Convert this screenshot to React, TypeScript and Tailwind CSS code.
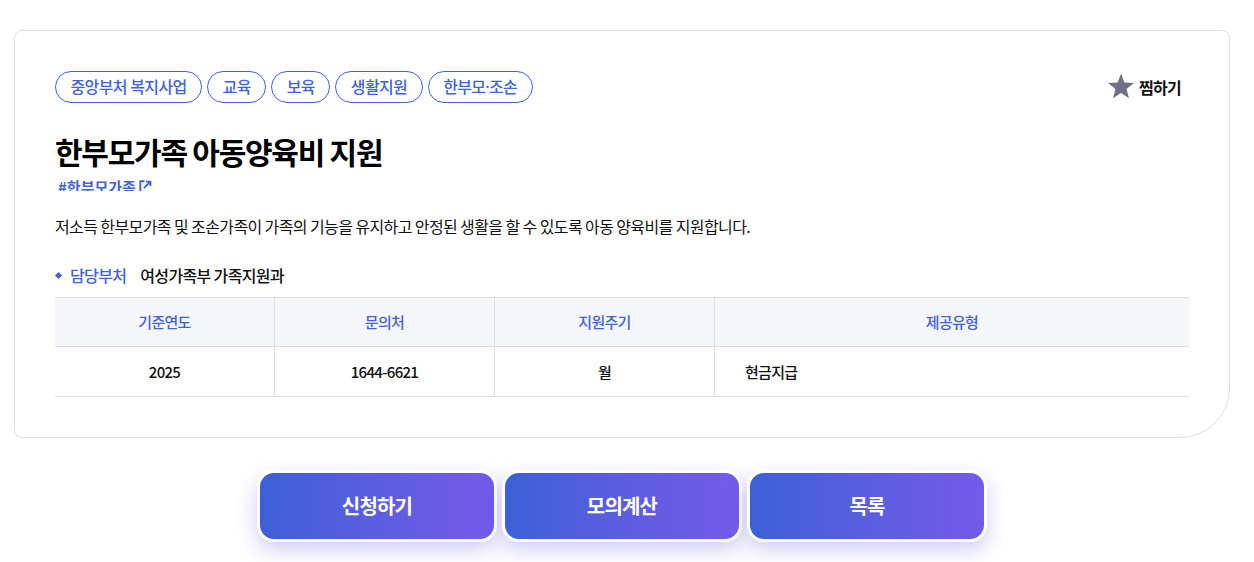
const tags = ["중앙부처 복지사업", "교육", "보육", "생활지원", "한부모·조손"];

const columns = [
  { label: "기준연도", value: "2025" },
  { label: "문의처", value: "1644-6621" },
  { label: "지원주기", value: "월" },
];

const buttons = ["신청하기", "모의계산", "목록"];

export default function App() {
  return (
    <div className="h-[562px] overflow-hidden bg-white pl-[14px] pr-[24px] pt-[30px] font-['Noto_Sans_CJK_KR','Noto_Sans',sans-serif] text-[#111]">
      <section className="h-[408px] rounded-[8px] rounded-br-[50px] border border-[#e1e1e1] bg-white px-[40px] pt-[40px]">
        <div className="flex items-center justify-between">
          <ul className="flex gap-[5px]">
            {tags.map((tag) => (
              <li
                key={tag}
                className="flex h-[32px] items-center rounded-full border border-[#3f63d8] px-[14.5px] font-['Noto_Sans','Noto_Sans_CJK_KR',sans-serif] text-[16px] font-medium tracking-[-0.65px] text-[#3f63d8]"
              >
                {tag}
              </li>
            ))}
          </ul>
          <button className="mr-[8px] flex items-center gap-[5px] text-[16px] font-bold tracking-[-0.7px]">
            <svg viewBox="0 0 26 26" className="mt-[-3px] h-[26px] w-[26px]" fill="#6f7189">
              <path d="M13 0.5l3.4 8.9 9.6.5-7.5 6 2.5 9.3-8-5.2-8 5.2 2.5-9.3-7.5-6 9.6-.5z" />
            </svg>
            찜하기
          </button>
        </div>

        <h1 className="mt-[26px] text-[30px] font-bold leading-[44px] tracking-[-1.25px] text-black">
          한부모가족 아동양육비 지원
        </h1>
        <div className="ml-[3px] mt-[4px] flex h-[14px] items-start overflow-hidden text-[15px] font-bold leading-[20px] text-[#4464dc]">
          #한부모가족
          <svg viewBox="0 0 12 12" className="ml-[3px] mt-[3px] h-[13px] w-[13px]" fill="none" stroke="#3f63d8" strokeWidth="1.8">
            <path d="M5 1.2H1.2v10.8" />
            <path d="M4.5 7.5L10 2M6.5 1.5h4v4" />
          </svg>
        </div>

        <p className="mt-[23px] text-[16px] leading-[24px] tracking-[-0.6px]">
          저소득 한부모가족 및 조손가족이 가족의 기능을 유지하고 안정된 생활을 할 수 있도록 아동 양육비를 지원합니다.
        </p>

        <div className="mt-[25px] flex h-[24px] items-center text-[16px] font-medium tracking-[-0.65px]">
          <span className="ml-[1px] h-[5px] w-[5px] rotate-45 bg-[#3f63d8]" />
          <span className="ml-[9px] text-[#3f63d8]">담당부처</span>
          <span className="ml-[14px]">여성가족부 가족지원과</span>
        </div>

        <div className="mt-[10px] grid grid-cols-[220px_220px_220px_1fr] border-y border-[#dfdfe2] text-[15px] tracking-[-0.7px]">
          {columns.map((col) => (
            <div key={col.label} className="flex h-[49px] items-center justify-center border-b border-r border-[#dfdfe2] bg-[#f5f6fa] pt-[1px] font-medium text-[#3f63d8]">
              {col.label}
            </div>
          ))}
          <div className="flex h-[49px] items-center justify-center border-b border-[#dfdfe2] bg-[#f5f6fa] pt-[1px] font-medium text-[#3f63d8]">
            제공유형
          </div>
          {columns.map((col) => (
            <div key={col.value} className="flex h-[49px] items-center justify-center border-r border-[#dfdfe2] pt-[1px] font-medium">
              {col.value}
            </div>
          ))}
          <div className="flex h-[49px] items-center pl-[30px] pt-[1px] font-medium">현금지급</div>
        </div>
      </section>

      <div className="mt-[32px] flex justify-center gap-[5px]">
        {buttons.map((label) => (
          <button
            key={label}
            className="h-[72px] w-[240px] rounded-[17px] border-[3px] border-white bg-gradient-to-r from-[#3a60d6] to-[#755aea] bg-origin-border text-[20px] font-bold tracking-[-0.8px] text-white shadow-[0_8px_20px_rgba(70,60,190,0.25)]"
          >
            {label}
          </button>
        ))}
      </div>
    </div>
  );
}
